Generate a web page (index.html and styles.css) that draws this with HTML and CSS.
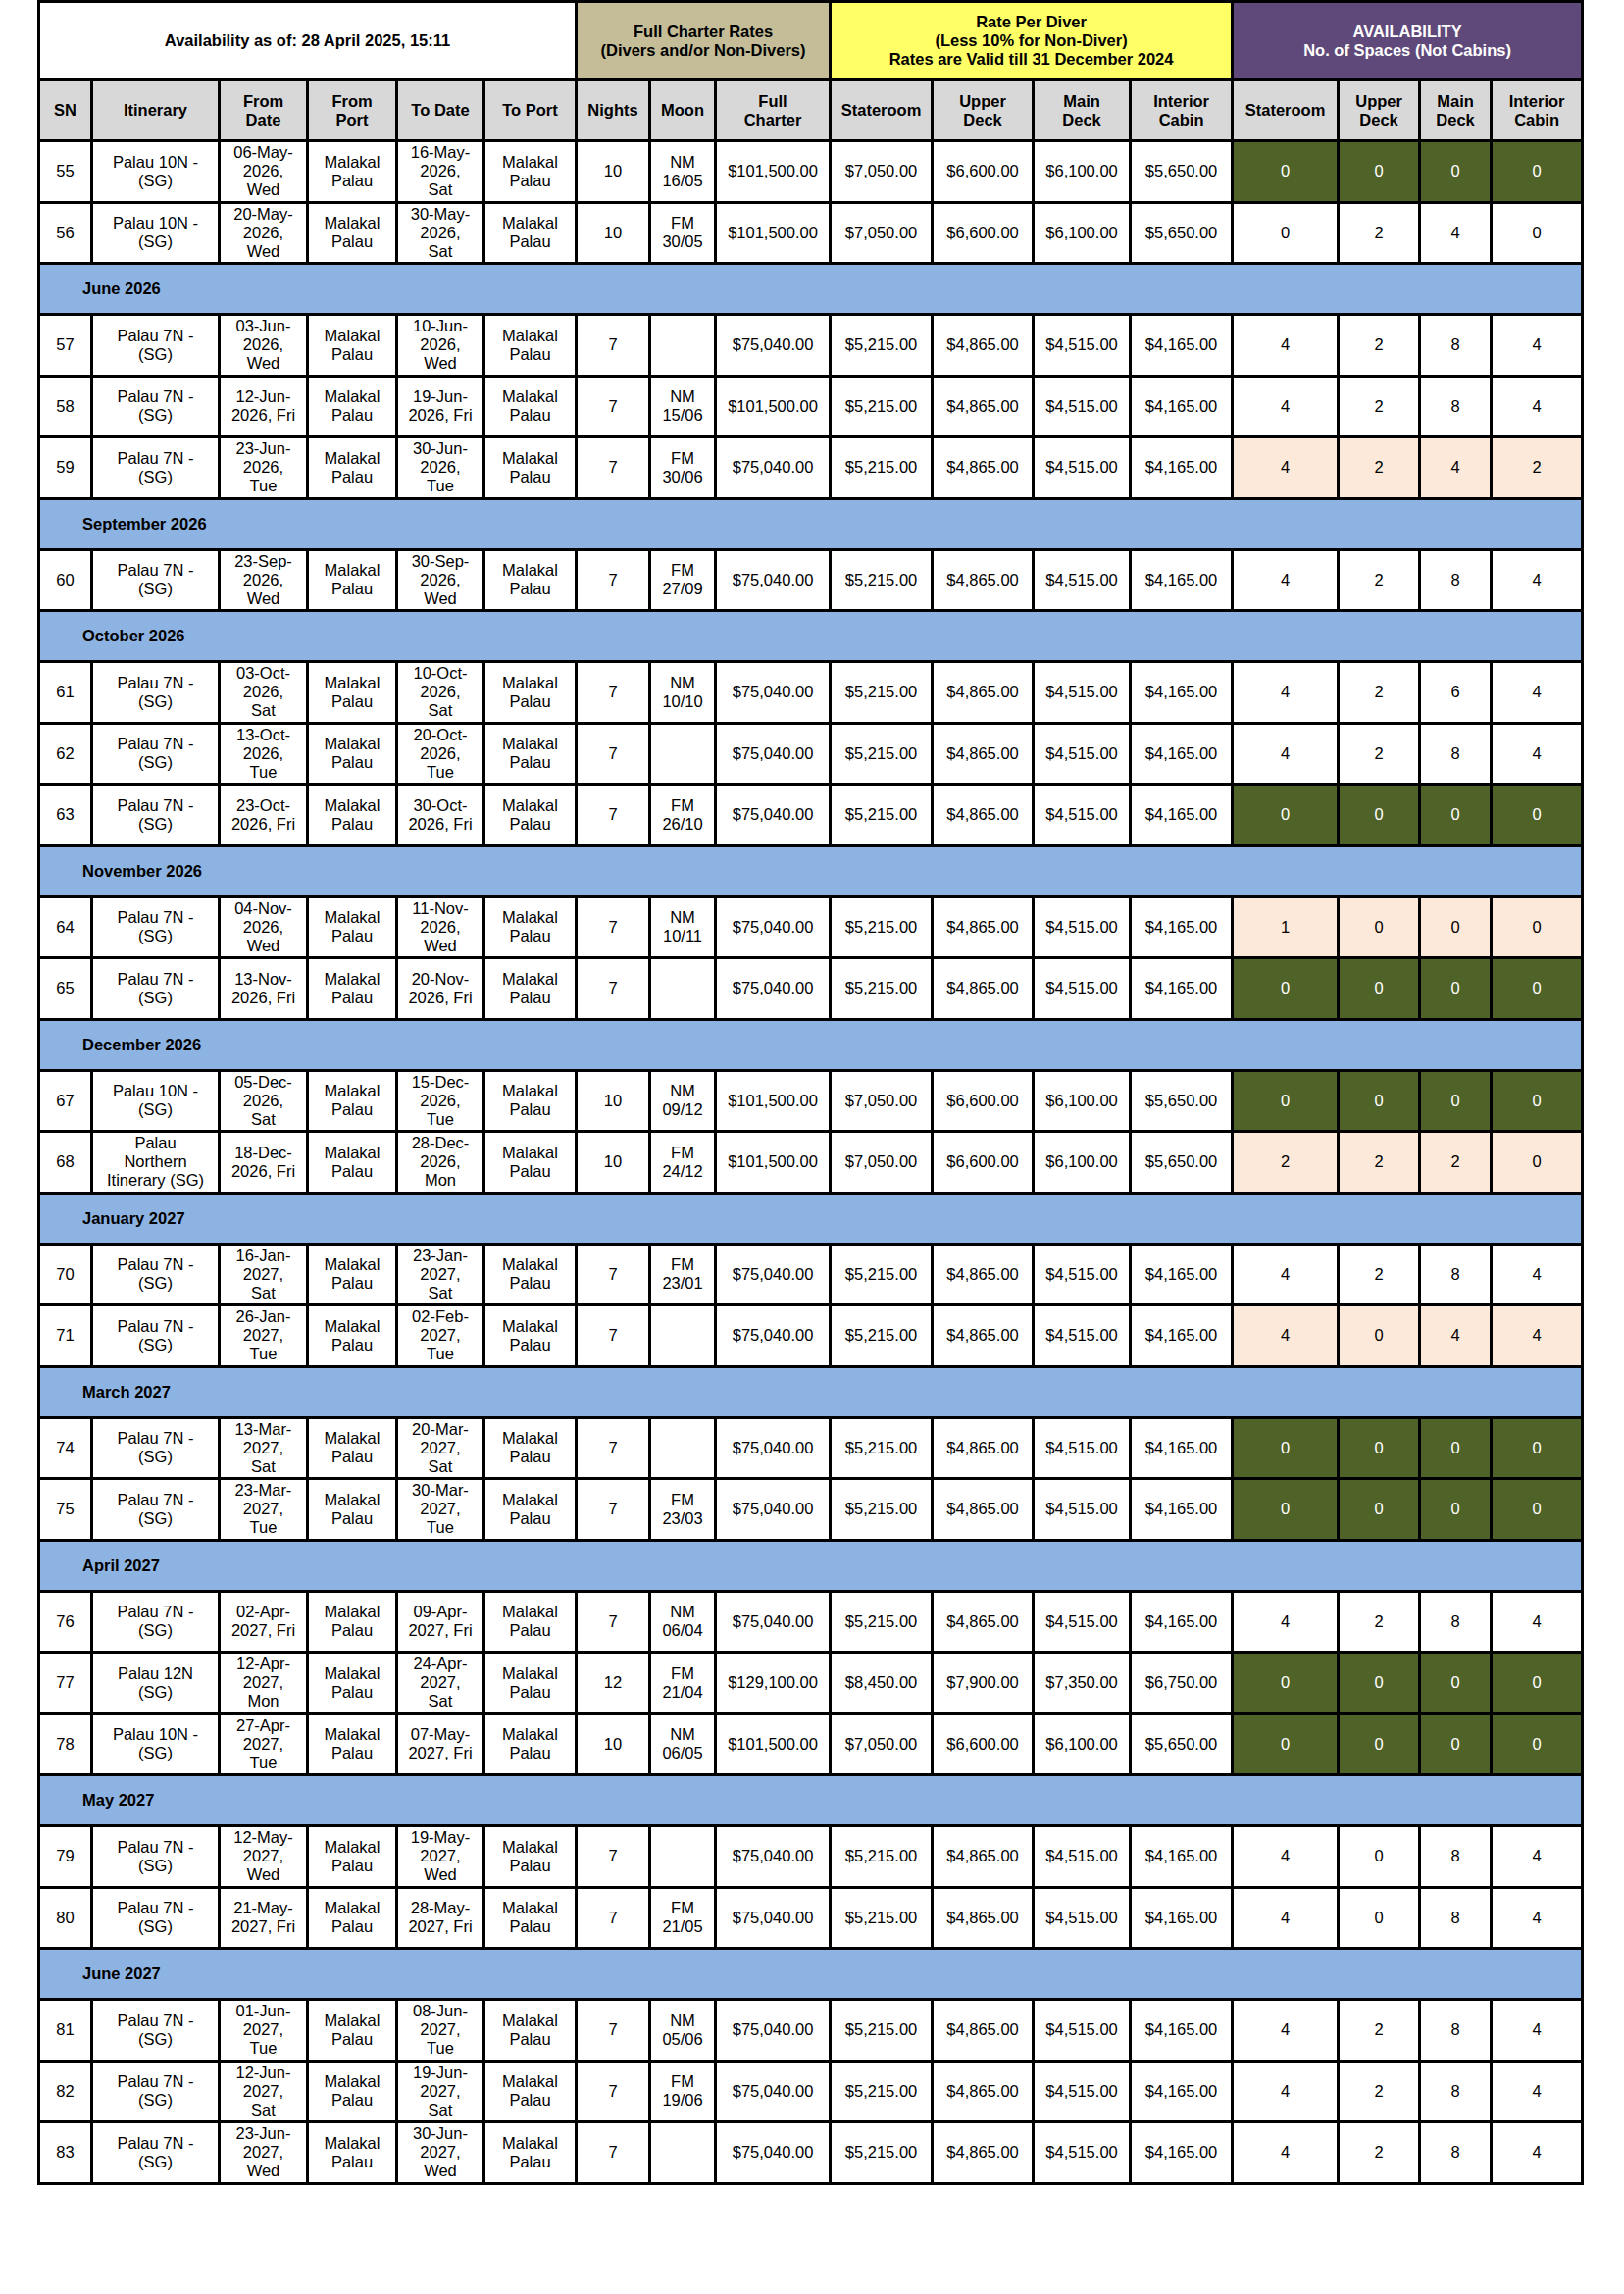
FILE: index.html
```html
<!DOCTYPE html>
<html>
<head>
<meta charset="utf-8">
<title>Availability</title>
<link rel="stylesheet" href="styles.css">
</head>
<body>
<table class="sched">
<colgroup>
<col class="c-sn"><col class="c-it"><col class="c-fd"><col class="c-fp"><col class="c-td"><col class="c-tp"><col class="c-n"><col class="c-m"><col class="c-fc"><col class="c-r1"><col class="c-r2"><col class="c-r3"><col class="c-r4"><col class="c-a1"><col class="c-a2"><col class="c-a3"><col class="c-a4">
</colgroup>
<thead>
<tr class="h1">
<th colspan="6" class="title">Availability as of: 28 April 2025, 15:11</th>
<th colspan="3" class="tan">Full Charter Rates<br>(Divers and/or Non-Divers)</th>
<th colspan="4" class="yellow">Rate Per Diver<br>(Less 10% for Non-Diver)<br>Rates are Valid till 31 December 2024</th>
<th colspan="4" class="purple">AVAILABILITY<br>No. of Spaces (Not Cabins)</th>
</tr>
<tr class="h2">
<th>SN</th><th>Itinerary</th><th>From<br>Date</th><th>From<br>Port</th><th>To Date</th><th>To Port</th><th>Nights</th><th>Moon</th><th>Full<br>Charter</th><th>Stateroom</th><th>Upper<br>Deck</th><th>Main<br>Deck</th><th>Interior<br>Cabin</th><th>Stateroom</th><th>Upper<br>Deck</th><th>Main<br>Deck</th><th>Interior<br>Cabin</th>
</tr>
</thead>
<tbody>
<tr class="row"><td>55</td><td>Palau 10N -<br>(SG)</td><td>06-May-<br>2026,<br>Wed</td><td>Malakal<br>Palau</td><td>16-May-<br>2026,<br>Sat</td><td>Malakal<br>Palau</td><td>10</td><td>NM<br>16/05</td><td>$101,500.00</td><td>$7,050.00</td><td>$6,600.00</td><td>$6,100.00</td><td>$5,650.00</td><td class="full">0</td><td class="full">0</td><td class="full">0</td><td class="full">0</td></tr>
<tr class="row"><td>56</td><td>Palau 10N -<br>(SG)</td><td>20-May-<br>2026,<br>Wed</td><td>Malakal<br>Palau</td><td>30-May-<br>2026,<br>Sat</td><td>Malakal<br>Palau</td><td>10</td><td>FM<br>30/05</td><td>$101,500.00</td><td>$7,050.00</td><td>$6,600.00</td><td>$6,100.00</td><td>$5,650.00</td><td>0</td><td>2</td><td>4</td><td>0</td></tr>

<tr class="month"><td colspan="17">June 2026</td></tr>
<tr class="row"><td>57</td><td>Palau 7N -<br>(SG)</td><td>03-Jun-<br>2026,<br>Wed</td><td>Malakal<br>Palau</td><td>10-Jun-<br>2026,<br>Wed</td><td>Malakal<br>Palau</td><td>7</td><td></td><td>$75,040.00</td><td>$5,215.00</td><td>$4,865.00</td><td>$4,515.00</td><td>$4,165.00</td><td>4</td><td>2</td><td>8</td><td>4</td></tr>
<tr class="row"><td>58</td><td>Palau 7N -<br>(SG)</td><td>12-Jun-<br>2026, Fri</td><td>Malakal<br>Palau</td><td>19-Jun-<br>2026, Fri</td><td>Malakal<br>Palau</td><td>7</td><td>NM<br>15/06</td><td>$101,500.00</td><td>$5,215.00</td><td>$4,865.00</td><td>$4,515.00</td><td>$4,165.00</td><td>4</td><td>2</td><td>8</td><td>4</td></tr>
<tr class="row"><td>59</td><td>Palau 7N -<br>(SG)</td><td>23-Jun-<br>2026,<br>Tue</td><td>Malakal<br>Palau</td><td>30-Jun-<br>2026,<br>Tue</td><td>Malakal<br>Palau</td><td>7</td><td>FM<br>30/06</td><td>$75,040.00</td><td>$5,215.00</td><td>$4,865.00</td><td>$4,515.00</td><td>$4,165.00</td><td class="low">4</td><td class="low">2</td><td class="low">4</td><td class="low">2</td></tr>

<tr class="month"><td colspan="17">September 2026</td></tr>
<tr class="row"><td>60</td><td>Palau 7N -<br>(SG)</td><td>23-Sep-<br>2026,<br>Wed</td><td>Malakal<br>Palau</td><td>30-Sep-<br>2026,<br>Wed</td><td>Malakal<br>Palau</td><td>7</td><td>FM<br>27/09</td><td>$75,040.00</td><td>$5,215.00</td><td>$4,865.00</td><td>$4,515.00</td><td>$4,165.00</td><td>4</td><td>2</td><td>8</td><td>4</td></tr>

<tr class="month"><td colspan="17">October 2026</td></tr>
<tr class="row"><td>61</td><td>Palau 7N -<br>(SG)</td><td>03-Oct-<br>2026,<br>Sat</td><td>Malakal<br>Palau</td><td>10-Oct-<br>2026,<br>Sat</td><td>Malakal<br>Palau</td><td>7</td><td>NM<br>10/10</td><td>$75,040.00</td><td>$5,215.00</td><td>$4,865.00</td><td>$4,515.00</td><td>$4,165.00</td><td>4</td><td>2</td><td>6</td><td>4</td></tr>
<tr class="row"><td>62</td><td>Palau 7N -<br>(SG)</td><td>13-Oct-<br>2026,<br>Tue</td><td>Malakal<br>Palau</td><td>20-Oct-<br>2026,<br>Tue</td><td>Malakal<br>Palau</td><td>7</td><td></td><td>$75,040.00</td><td>$5,215.00</td><td>$4,865.00</td><td>$4,515.00</td><td>$4,165.00</td><td>4</td><td>2</td><td>8</td><td>4</td></tr>
<tr class="row"><td>63</td><td>Palau 7N -<br>(SG)</td><td>23-Oct-<br>2026, Fri</td><td>Malakal<br>Palau</td><td>30-Oct-<br>2026, Fri</td><td>Malakal<br>Palau</td><td>7</td><td>FM<br>26/10</td><td>$75,040.00</td><td>$5,215.00</td><td>$4,865.00</td><td>$4,515.00</td><td>$4,165.00</td><td class="full">0</td><td class="full">0</td><td class="full">0</td><td class="full">0</td></tr>

<tr class="month"><td colspan="17">November 2026</td></tr>
<tr class="row"><td>64</td><td>Palau 7N -<br>(SG)</td><td>04-Nov-<br>2026,<br>Wed</td><td>Malakal<br>Palau</td><td>11-Nov-<br>2026,<br>Wed</td><td>Malakal<br>Palau</td><td>7</td><td>NM<br>10/11</td><td>$75,040.00</td><td>$5,215.00</td><td>$4,865.00</td><td>$4,515.00</td><td>$4,165.00</td><td class="low">1</td><td class="low">0</td><td class="low">0</td><td class="low">0</td></tr>
<tr class="row"><td>65</td><td>Palau 7N -<br>(SG)</td><td>13-Nov-<br>2026, Fri</td><td>Malakal<br>Palau</td><td>20-Nov-<br>2026, Fri</td><td>Malakal<br>Palau</td><td>7</td><td></td><td>$75,040.00</td><td>$5,215.00</td><td>$4,865.00</td><td>$4,515.00</td><td>$4,165.00</td><td class="full">0</td><td class="full">0</td><td class="full">0</td><td class="full">0</td></tr>

<tr class="month"><td colspan="17">December 2026</td></tr>
<tr class="row"><td>67</td><td>Palau 10N -<br>(SG)</td><td>05-Dec-<br>2026,<br>Sat</td><td>Malakal<br>Palau</td><td>15-Dec-<br>2026,<br>Tue</td><td>Malakal<br>Palau</td><td>10</td><td>NM<br>09/12</td><td>$101,500.00</td><td>$7,050.00</td><td>$6,600.00</td><td>$6,100.00</td><td>$5,650.00</td><td class="full">0</td><td class="full">0</td><td class="full">0</td><td class="full">0</td></tr>
<tr class="row"><td>68</td><td>Palau<br>Northern<br>Itinerary (SG)</td><td>18-Dec-<br>2026, Fri</td><td>Malakal<br>Palau</td><td>28-Dec-<br>2026,<br>Mon</td><td>Malakal<br>Palau</td><td>10</td><td>FM<br>24/12</td><td>$101,500.00</td><td>$7,050.00</td><td>$6,600.00</td><td>$6,100.00</td><td>$5,650.00</td><td class="low">2</td><td class="low">2</td><td class="low">2</td><td class="low">0</td></tr>

<tr class="month"><td colspan="17">January 2027</td></tr>
<tr class="row"><td>70</td><td>Palau 7N -<br>(SG)</td><td>16-Jan-<br>2027,<br>Sat</td><td>Malakal<br>Palau</td><td>23-Jan-<br>2027,<br>Sat</td><td>Malakal<br>Palau</td><td>7</td><td>FM<br>23/01</td><td>$75,040.00</td><td>$5,215.00</td><td>$4,865.00</td><td>$4,515.00</td><td>$4,165.00</td><td>4</td><td>2</td><td>8</td><td>4</td></tr>
<tr class="row"><td>71</td><td>Palau 7N -<br>(SG)</td><td>26-Jan-<br>2027,<br>Tue</td><td>Malakal<br>Palau</td><td>02-Feb-<br>2027,<br>Tue</td><td>Malakal<br>Palau</td><td>7</td><td></td><td>$75,040.00</td><td>$5,215.00</td><td>$4,865.00</td><td>$4,515.00</td><td>$4,165.00</td><td class="low">4</td><td class="low">0</td><td class="low">4</td><td class="low">4</td></tr>

<tr class="month"><td colspan="17">March 2027</td></tr>
<tr class="row"><td>74</td><td>Palau 7N -<br>(SG)</td><td>13-Mar-<br>2027,<br>Sat</td><td>Malakal<br>Palau</td><td>20-Mar-<br>2027,<br>Sat</td><td>Malakal<br>Palau</td><td>7</td><td></td><td>$75,040.00</td><td>$5,215.00</td><td>$4,865.00</td><td>$4,515.00</td><td>$4,165.00</td><td class="full">0</td><td class="full">0</td><td class="full">0</td><td class="full">0</td></tr>
<tr class="row"><td>75</td><td>Palau 7N -<br>(SG)</td><td>23-Mar-<br>2027,<br>Tue</td><td>Malakal<br>Palau</td><td>30-Mar-<br>2027,<br>Tue</td><td>Malakal<br>Palau</td><td>7</td><td>FM<br>23/03</td><td>$75,040.00</td><td>$5,215.00</td><td>$4,865.00</td><td>$4,515.00</td><td>$4,165.00</td><td class="full">0</td><td class="full">0</td><td class="full">0</td><td class="full">0</td></tr>

<tr class="month"><td colspan="17">April 2027</td></tr>
<tr class="row"><td>76</td><td>Palau 7N -<br>(SG)</td><td>02-Apr-<br>2027, Fri</td><td>Malakal<br>Palau</td><td>09-Apr-<br>2027, Fri</td><td>Malakal<br>Palau</td><td>7</td><td>NM<br>06/04</td><td>$75,040.00</td><td>$5,215.00</td><td>$4,865.00</td><td>$4,515.00</td><td>$4,165.00</td><td>4</td><td>2</td><td>8</td><td>4</td></tr>
<tr class="row"><td>77</td><td>Palau 12N<br>(SG)</td><td>12-Apr-<br>2027,<br>Mon</td><td>Malakal<br>Palau</td><td>24-Apr-<br>2027,<br>Sat</td><td>Malakal<br>Palau</td><td>12</td><td>FM<br>21/04</td><td>$129,100.00</td><td>$8,450.00</td><td>$7,900.00</td><td>$7,350.00</td><td>$6,750.00</td><td class="full">0</td><td class="full">0</td><td class="full">0</td><td class="full">0</td></tr>
<tr class="row"><td>78</td><td>Palau 10N -<br>(SG)</td><td>27-Apr-<br>2027,<br>Tue</td><td>Malakal<br>Palau</td><td>07-May-<br>2027, Fri</td><td>Malakal<br>Palau</td><td>10</td><td>NM<br>06/05</td><td>$101,500.00</td><td>$7,050.00</td><td>$6,600.00</td><td>$6,100.00</td><td>$5,650.00</td><td class="full">0</td><td class="full">0</td><td class="full">0</td><td class="full">0</td></tr>

<tr class="month"><td colspan="17">May 2027</td></tr>
<tr class="row"><td>79</td><td>Palau 7N -<br>(SG)</td><td>12-May-<br>2027,<br>Wed</td><td>Malakal<br>Palau</td><td>19-May-<br>2027,<br>Wed</td><td>Malakal<br>Palau</td><td>7</td><td></td><td>$75,040.00</td><td>$5,215.00</td><td>$4,865.00</td><td>$4,515.00</td><td>$4,165.00</td><td>4</td><td>0</td><td>8</td><td>4</td></tr>
<tr class="row"><td>80</td><td>Palau 7N -<br>(SG)</td><td>21-May-<br>2027, Fri</td><td>Malakal<br>Palau</td><td>28-May-<br>2027, Fri</td><td>Malakal<br>Palau</td><td>7</td><td>FM<br>21/05</td><td>$75,040.00</td><td>$5,215.00</td><td>$4,865.00</td><td>$4,515.00</td><td>$4,165.00</td><td>4</td><td>0</td><td>8</td><td>4</td></tr>

<tr class="month"><td colspan="17">June 2027</td></tr>
<tr class="row"><td>81</td><td>Palau 7N -<br>(SG)</td><td>01-Jun-<br>2027,<br>Tue</td><td>Malakal<br>Palau</td><td>08-Jun-<br>2027,<br>Tue</td><td>Malakal<br>Palau</td><td>7</td><td>NM<br>05/06</td><td>$75,040.00</td><td>$5,215.00</td><td>$4,865.00</td><td>$4,515.00</td><td>$4,165.00</td><td>4</td><td>2</td><td>8</td><td>4</td></tr>
<tr class="row"><td>82</td><td>Palau 7N -<br>(SG)</td><td>12-Jun-<br>2027,<br>Sat</td><td>Malakal<br>Palau</td><td>19-Jun-<br>2027,<br>Sat</td><td>Malakal<br>Palau</td><td>7</td><td>FM<br>19/06</td><td>$75,040.00</td><td>$5,215.00</td><td>$4,865.00</td><td>$4,515.00</td><td>$4,165.00</td><td>4</td><td>2</td><td>8</td><td>4</td></tr>
<tr class="row"><td>83</td><td>Palau 7N -<br>(SG)</td><td>23-Jun-<br>2027,<br>Wed</td><td>Malakal<br>Palau</td><td>30-Jun-<br>2027,<br>Wed</td><td>Malakal<br>Palau</td><td>7</td><td></td><td>$75,040.00</td><td>$5,215.00</td><td>$4,865.00</td><td>$4,515.00</td><td>$4,165.00</td><td>4</td><td>2</td><td>8</td><td>4</td></tr>
</tbody>
</table>
</body>
</html>
```

FILE: styles.css
```css
html, body {
  margin: 0;
  padding: 0;
  background: #ffffff;
}

body {
  font-family: "Liberation Sans", Arial, sans-serif;
  font-size: 16.5px;
  line-height: 19px;
  color: #000000;
}

.sched {
  border-collapse: collapse;
  table-layout: fixed;
  width: 1577px;
  margin: 0 0 0 38px;
  border: 3px solid #000;
}

.sched th,
.sched td {
  border: 3px solid #000;
  padding: 0 2px;
  text-align: center;
  vertical-align: middle;
  overflow: hidden;
  white-space: nowrap;
}

.c-sn { width: 54px; }
.c-it { width: 130px; }
.c-fd { width: 90px; }
.c-fp { width: 91px; }
.c-td { width: 89px; }
.c-tp { width: 94px; }
.c-n  { width: 75px; }
.c-m  { width: 67px; }
.c-fc { width: 117px; }
.c-r1 { width: 104px; }
.c-r2 { width: 103px; }
.c-r3 { width: 99px; }
.c-r4 { width: 104px; }
.c-a1 { width: 108px; }
.c-a2 { width: 83px; }
.c-a3 { width: 73px; }
.c-a4 { width: 93px; }

.h1 { height: 80px; }
.h1 th { font-weight: bold; }
.h1 .title { background: #ffffff; }
.h1 .tan { background: #c4bd97; }
.h1 .yellow { background: #ffff66; }
.h1 .purple { background: #5f497a; color: #ffffff; }

.h2 { height: 62px; }
.h2 th {
  background: #d8d8d8;
  font-weight: bold;
}

.row { height: 62.5px; }
.row td { background: #ffffff; }

.row td.full {
  background: #4f6228;
  color: #ffffff;
}

.row td.low {
  background: #fde9d9;
}

.month { height: 52px; }
.month td {
  background: #8db3e2;
  font-weight: bold;
  text-align: left;
  padding-left: 43px;
}
```
